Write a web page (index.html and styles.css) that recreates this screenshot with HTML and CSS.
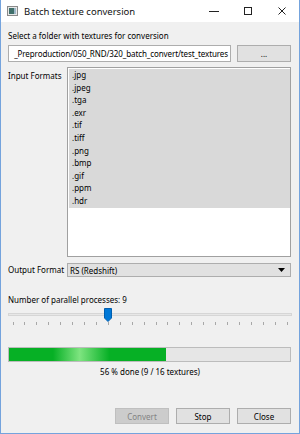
FILE: index.html
```html
<!DOCTYPE html>
<html lang="en">

<head>
    <meta charset="UTF-8">
    <meta name="viewport" content="width=device-width, initial-scale=1.0">
    <link rel="stylesheet" href="styles.css">
    <title>Batch texture conversion</title>
</head>

<body>

    <div class="window">

        <section class="titlebar">
            <svg class="app-icon" width="11" height="10" viewBox="0 0 11 10">
                <rect x="0.5" y="0.5" width="10" height="9" fill="#e8e8e8" stroke="#8a8a8a" />
                <rect x="2" y="2" width="5" height="6" fill="#3f6f6a" />
                <rect x="7" y="2" width="2" height="6" fill="#9fb8c8" />
            </svg>
            <span class="title">Batch texture conversion</span>
            <span class="caption-btn">
                <svg width="10" height="10" viewBox="0 0 10 10">
                    <line x1="0" y1="5.5" x2="10" y2="5.5" stroke="#222" stroke-width="1" />
                </svg>
            </span>
            <span class="caption-btn">
                <svg width="10" height="10" viewBox="0 0 10 10">
                    <rect x="1.5" y="1.5" width="7" height="7" fill="none" stroke="#222" stroke-width="1" />
                </svg>
            </span>
            <span class="caption-btn">
                <svg width="10" height="10" viewBox="0 0 10 10">
                    <path d="M1.5 1.5 L8.5 8.5 M8.5 1.5 L1.5 8.5" stroke="#222" stroke-width="1" />
                </svg>
            </span>
        </section>

        <section class="content">

            <p class="label folder-label">Select a folder with textures for conversion</p>

            <div class="folder-row">
                <div class="line-edit">
                    <span>_Preproduction/050_RND/320_batch_convert/test_textures</span>
                </div>
                <button class="btn browse">...</button>
            </div>

            <div class="formats-row">
                <span class="label side-label formats-label">Input Formats</span>
                <ul class="list">
                    <li class="selected">.jpg</li>
                    <li class="selected">.jpeg</li>
                    <li class="selected">.tga</li>
                    <li class="selected">.exr</li>
                    <li class="selected">.tif</li>
                    <li class="selected">.tiff</li>
                    <li class="selected">.png</li>
                    <li class="selected">.bmp</li>
                    <li class="selected">.gif</li>
                    <li class="selected">.ppm</li>
                    <li class="selected">.hdr</li>
                </ul>
            </div>

            <div class="output-row">
                <span class="label side-label">Output Format</span>
                <div class="combo">
                    <span>RS (Redshift)</span>
                    <svg width="7" height="4" viewBox="0 0 7 4">
                        <polygon points="0,0 7,0 3.5,4" fill="#000" />
                    </svg>
                </div>
            </div>

            <p class="label processes-label">Number of parallel processes: 9</p>

            <div class="slider">
                <div class="groove"></div>
                <div class="ticks">
                    <span></span><span></span><span></span><span></span><span></span><span></span>
                    <span></span><span></span><span></span><span></span><span></span><span></span>
                    <span></span><span></span><span></span><span></span><span></span><span></span>
                    <span></span><span></span><span></span><span></span><span></span><span></span>
                </div>
                <svg class="handle" width="8" height="14" viewBox="0 0 8 14">
                    <polygon points="0.5,0.5 7.5,0.5 7.5,10 4,13.5 0.5,10" fill="#0078d7" stroke="#005fb0" stroke-width="1" />
                </svg>
            </div>

            <div class="progress">
                <div class="progress-fill" style="width: 56%"></div>
            </div>
            <p class="label progress-text">56 % done (9 / 16 textures)</p>

            <div class="buttons">
                <button class="btn disabled">Convert</button>
                <button class="btn">Stop</button>
                <button class="btn">Close</button>
            </div>

        </section>

    </div>

</body>

</html>
```

FILE: styles.css
```css
* {
    box-sizing: border-box;
    font-family: "Noto Sans", "DejaVu Sans", sans-serif;
}

body {
    margin: 0;
    font-size: 8px;
    color: #000;
}

p,
ul {
    margin: 0;
    padding: 0;
}

.window {
    width: 300px;
    height: 434px;
    border: 1px solid #74a3dd;
    border-top: none;
    background-color: #f0f0f0;
    display: flex;
    flex-direction: column;
}

.titlebar {
    height: 22px;
    background-color: #fff;
    display: flex;
    align-items: center;
    padding-left: 6px;
}

.app-icon {
    margin-right: 6px;
}

.title {
    flex: 1;
    font-size: 9.5px;
    color: #111;
}

.caption-btn {
    width: 34px;
    height: 22px;
    display: flex;
    align-items: center;
    justify-content: center;
}

.content {
    flex: 1;
    display: flex;
    flex-direction: column;
    padding: 0 7px 9px 7px;
}

.label {
    line-height: 12px;
    color: #000;
    white-space: nowrap;
}

.folder-label {
    margin-top: 8px;
}

.folder-row {
    display: flex;
    margin-top: 3px;
    height: 17px;
}

.line-edit {
    flex: 1;
    background-color: #fff;
    border: 1px solid #adadad;
    display: flex;
    justify-content: flex-end;
    align-items: center;
    padding-right: 2px;
    white-space: nowrap;
}

.line-edit span {
    letter-spacing: -0.1px;
}

.btn {
    width: 54px;
    height: 16px;
    padding: 0;
    font-size: 8px;
    color: #000;
    background-color: #e1e1e1;
    border: 1px solid #adadad;
}

.browse {
    height: 17px;
    margin-left: 6px;
    margin-right: 1px;
}

.btn.disabled {
    background-color: #cccccc;
    border-color: #bfbfbf;
    color: #838383;
}

.formats-row {
    display: flex;
    margin-top: 5px;
}

.side-label {
    width: 59px;
}

.formats-label {
    padding-top: 3px;
}

.list {
    flex: 1;
    height: 190px;
    list-style: none;
    background-color: #fff;
    border: 1px solid #a0a0a0;
    padding: 1px 0 0 1px;
    margin-right: 1px;
}

.list li {
    height: 12.6px;
    line-height: 12.6px;
    padding-left: 3px;
}

.list li.selected {
    background-color: #d9d9d9;
}

.output-row {
    display: flex;
    align-items: center;
    margin-top: 6px;
}

.combo {
    flex: 1;
    height: 14px;
    margin-right: 1px;
    background-color: #e1e1e1;
    border: 1px solid #adadad;
    display: flex;
    align-items: center;
    justify-content: space-between;
    padding: 0 5px 0 2px;
}

.processes-label {
    margin-top: 17px;
}

.slider {
    position: relative;
    height: 22px;
}

.groove {
    margin-top: 7px;
    height: 3px;
    background-color: #e7e7e7;
    border: 1px solid #d6d6d6;
}

.ticks {
    display: flex;
    justify-content: space-between;
    padding: 0 4px 0 4.5px;
    margin-top: 6px;
}

.ticks span {
    width: 1px;
    height: 3px;
    background-color: #a8a8a8;
}

.handle {
    position: absolute;
    left: 96px;
    top: 2px;
}

.progress {
    margin-top: 19px;
    height: 15px;
    border: 1px solid #bcbcbc;
    background-color: #e6e6e6;
    margin-right: 1px;
}

.progress-fill {
    height: 100%;
    background: linear-gradient(90deg, #06b025 0%, #06b025 28%, #7ee480 45%, #06b025 64%, #06b025 100%);
}

.progress-text {
    margin-top: 4px;
    text-align: center;
}

.buttons {
    margin-top: auto;
    display: flex;
    justify-content: flex-end;
    gap: 7px;
    margin-right: 1px;
}
```
